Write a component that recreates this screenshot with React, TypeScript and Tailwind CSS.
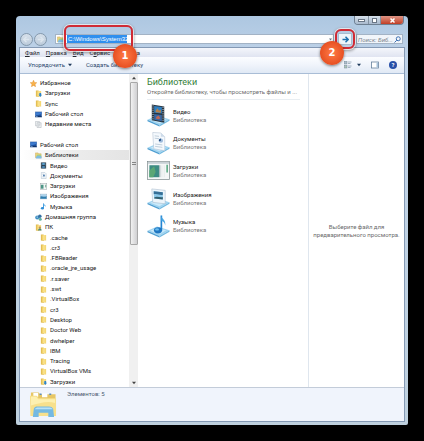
import type { ReactNode } from 'react';

type IconName =
  | 'star' | 'downloads' | 'folder' | 'desktop' | 'recent' | 'libraries' | 'video'
  | 'documents' | 'panel' | 'pictures' | 'music' | 'homegroup' | 'user';

interface TreeItem {
  label: string;
  icon: IconName;
  level: number;
  selected?: boolean;
}

const FAVORITES: TreeItem[] = [
  { label: 'Избранное', icon: 'star', level: 0 },
  { label: 'Загрузки', icon: 'downloads', level: 1 },
  { label: 'Sync', icon: 'folder', level: 1 },
  { label: 'Рабочий стол', icon: 'desktop', level: 1 },
  { label: 'Недавние места', icon: 'recent', level: 1 },
];

const DESKTOP: TreeItem[] = [
  { label: 'Рабочий стол', icon: 'desktop', level: 0 },
  { label: 'Библиотеки', icon: 'libraries', level: 1, selected: true },
  { label: 'Видео', icon: 'video', level: 2 },
  { label: 'Документы', icon: 'documents', level: 2 },
  { label: 'Загрузки', icon: 'panel', level: 2 },
  { label: 'Изображения', icon: 'pictures', level: 2 },
  { label: 'Музыка', icon: 'music', level: 2 },
  { label: 'Домашняя группа', icon: 'homegroup', level: 1 },
  { label: 'ПК', icon: 'user', level: 1 },
  { label: '.cache', icon: 'folder', level: 2 },
  { label: '.cr3', icon: 'folder', level: 2 },
  { label: '.FBReader', icon: 'folder', level: 2 },
  { label: '.oracle_jre_usage', icon: 'folder', level: 2 },
  { label: '.r.saver', icon: 'folder', level: 2 },
  { label: '.swt', icon: 'folder', level: 2 },
  { label: '.VirtualBox', icon: 'folder', level: 2 },
  { label: 'cr3', icon: 'folder', level: 2 },
  { label: 'Desktop', icon: 'folder', level: 2 },
  { label: 'Doctor Web', icon: 'folder', level: 2 },
  { label: 'dwhelper', icon: 'folder', level: 2 },
  { label: 'IBM', icon: 'folder', level: 2 },
  { label: 'Tracing', icon: 'folder', level: 2 },
  { label: 'VirtualBox VMs', icon: 'folder', level: 2 },
  { label: 'Загрузки', icon: 'downloads', level: 2 },
];

const LEVEL_PADDING = ['pl-[10px]', 'pl-[15px]', 'pl-[20px]'];

const folderShape = (
  <>
    <path d="M2 1h6l1 2v12H2z" fill="#e3be55" />
    <path d="M5 3l9-1v12l-9 1.500z" fill="#f5d873" />
    <path d="M3 13l4 2.500 7-1.500v1H4z" fill="#c79c35" />
    <path d="M9 3v11" stroke="#fdeeb0" strokeWidth="1.500" />
  </>
);

const screenShape = (
  <>
    <rect x="0.500" y="2" width="15" height="12" fill="#1d4f9c" stroke="#7692b8" />
    <path d="M1 3h14v4L1 11z" fill="#3d7bce" />
    <path d="M1 12.500h14" stroke="#14305f" strokeWidth="2" />
    <path d="M2 12.500h4" stroke="#8dbbe9" strokeWidth="1.500" />
  </>
);

const SMALL_ICONS: Record<IconName, ReactNode> = {
  star: <path d="M8 .5l2.200 5 5.300.6-4 3.700 1.200 5.500L8 12.500l-4.700 2.800 1.200-5.500-4-3.700 5.300-.6z" fill="#f9b24a" stroke="#dd8b2a" />,
  downloads: (
    <>
      {folderShape}
      <path d="M10 7h4v4h2l-4 5-4-5h2z" fill="#2b83cb" />
    </>
  ),
  folder: folderShape,
  desktop: screenShape,
  recent: (
    <>
      <path d="M1 1h9v10H1z" fill="#edf0f2" stroke="#a2abb2" />
      <path d="M5 4h9v11H5z" fill="#f8f9fa" stroke="#929ca5" />
      <path d="M7 7h5M7 9.500h5M7 12h3" stroke="#8d989f" />
    </>
  ),
  libraries: (
    <>
      <path d="M1 2h6l1 2h6v9H1z" fill="#efd37a" stroke="#c7a650" />
      <path d="M4 6h10v6H4z" fill="#9fce8b" />
      <path d="M2 11c4-3 9-3 13-1v5H2z" fill="#7fbbe2" />
    </>
  ),
  video: (
    <>
      <rect x="2" y="1" width="12" height="14" fill="#263b4d" />
      <rect x="5" y="2" width="6" height="5" fill="#5a9dc9" />
      <rect x="5" y="9" width="6" height="5" fill="#4b86b4" />
      <path d="M3.500 2v13M12.500 2v13" stroke="#b8c9d4" strokeDasharray="1.500 1.500" />
    </>
  ),
  documents: (
    <>
      <path d="M3 1h8l3 3v11H3z" fill="#f7fafd" stroke="#9cb0c4" />
      <path d="M5 5h4M5 11h6" stroke="#a3b5c6" />
      <rect x="7" y="6" width="4" height="4" fill="#4e7dae" />
    </>
  ),
  panel: (
    <>
      <rect x="0.500" y="1.500" width="15" height="13" fill="#f4f6f6" stroke="#8f9a9d" />
      <path d="M2 4h6v9H2z" fill="#4c9586" />
      <path d="M13 4v6" stroke="#5ca187" strokeWidth="2" />
    </>
  ),
  pictures: (
    <>
      <rect x="0.500" y="2.500" width="15" height="11" fill="#d8ebf7" stroke="#8ca6bb" />
      <path d="M1 8c5-2 8 2 14-1v6H1z" fill="#2f7dae" />
      <path d="M2 5h12" stroke="#8ec6e9" strokeWidth="2" />
    </>
  ),
  music: (
    <>
      <path d="M8 1v11" stroke="#2f8fd8" strokeWidth="2" />
      <path d="M8 1c1 3 6 3 5 8-1-3-3-3-5-4z" fill="#57aee8" />
      <ellipse cx="5.500" cy="12" rx="3.500" ry="3" fill="#2f8fd8" />
    </>
  ),
  homegroup: (
    <>
      <circle cx="5" cy="8" r="4.500" fill="#3f8fc3" />
      <circle cx="11" cy="5" r="4" fill="#3570a4" />
      <circle cx="12" cy="12" r="3.500" fill="#63b1a3" />
      <circle cx="5" cy="7" r="1.500" fill="#c8e8f6" />
    </>
  ),
  user: (
    <>
      {folderShape}
      <circle cx="11" cy="8" r="2.500" fill="#c08b5d" />
      <path d="M7 15c0-6 8-6 8 0z" fill="#4f8a76" />
    </>
  ),
};

// Tilted blue tray under the library icons
const tray = (
  <>
    <path d="M1 33l20-9 26 8-21 12z" fill="#9fd4f1" />
    <path d="M1 33l25 11v3L1 36z" fill="#4f9fd2" />
    <path d="M26 44l21-12v3L26 47z" fill="#72b9e0" />
    <path d="M7 33l14-6 19 5-14 8z" fill="#cbeafa" />
  </>
);

interface Library {
  name: string;
  icon: ReactNode;
}

const LIBRARIES: Library[] = [
  {
    name: 'Видео',
    icon: (
      <>
        {tray}
        <path d="M10 1l26 4v34l-26-5z" fill="#273440" />
        <path d="M15 4l16 2v14l-16-2z" fill="#2f7fc0" />
        <path d="M15 21l16 2v13l-16-3z" fill="#3a68a5" />
        <path d="M18 14l4-5 3 5 4-2v6l-11-1z" fill="#b98049" />
        <path d="M19 27l5-3 4 5-3 3-6-1z" fill="#bf6655" />
        <path d="M12.500 3v31M33.500 6v32" stroke="#dbe5eb" strokeWidth="2" strokeDasharray="2 2.500" />
      </>
    ),
  },
  {
    name: 'Документы',
    icon: (
      <>
        {tray}
        <path d="M12 1l17 1 8 8v29l-23-4z" fill="#f5f9fd" stroke="#a7b8ca" />
        <path d="M29 2v8h8z" fill="#cddbea" />
        <path d="M16 8l9 1M16 13l9 1M17 25l15 2M17 30l15 2" stroke="#aabdce" strokeWidth="1.500" />
        <circle cx="29" cy="18" r="4.500" fill="#9ebbdc" />
        <path d="M29 18v-4.500a4.500 4.500 0 0 0-4 6z" fill="#254f83" />
      </>
    ),
  },
  {
    name: 'Загрузки',
    icon: (
      <>
        <rect x="1" y="5" width="46" height="38" fill="#f5f7f7" stroke="#7e8b8e" strokeWidth="1.500" />
        <path d="M2 8h44" stroke="#c8d1d5" strokeWidth="4" />
        <rect x="5" y="13" width="20" height="25" fill="#3d8c83" />
        <path d="M5 38V24l10-9 3 12-5 11z" fill="#5ba775" />
        <path d="M25 13h3v25h-3z" fill="#a8b9bd" />
        <path d="M31 13v25M36 13v25" stroke="#d6dddf" />
        <path d="M42 12v16" stroke="#4ba278" strokeWidth="3" />
      </>
    ),
  },
  {
    name: 'Изображения',
    icon: (
      <>
        {tray}
        <path d="M10 4l28 3v28l-26-3z" fill="#edf5fb" stroke="#9db2c5" />
        <path d="M14 9l19 2v15l-18-2z" fill="#8cc8e8" />
        <path d="M14 9l19 2v5c-6 2-11-3-19-1z" fill="#376f96" />
        <path d="M15 22c6-4 12 1 18-1v5l-18-2z" fill="#315f70" />
      </>
    ),
  },
  {
    name: 'Музыка',
    icon: (
      <>
        {tray}
        <path d="M30 1v30" stroke="#2386d2" strokeWidth="3.500" />
        <path d="M30 1c1 8 10 9 8 21-1-7-4-8-8-10z" fill="#4aa7e2" />
        <ellipse cx="23" cy="32" rx="8.500" ry="6.500" fill="#1f76c1" />
        <ellipse cx="21" cy="30" rx="4" ry="2.500" fill="#6bbdf0" />
      </>
    ),
  },
];

function TreeRow({ item }: { item: TreeItem }) {
  return (
    <li className={`flex min-h-0 flex-1 ${item.selected ? 'bg-linear-to-r from-white via-[#ececec] to-[#e4e4e4]' : ''}`}>
      <button className={`flex w-full items-center gap-[3px] whitespace-nowrap text-left leading-none ${LEVEL_PADDING[item.level]}`}>
        <svg className="size-[7px] shrink-0" viewBox="0 0 16 16" aria-hidden="true">
          {SMALL_ICONS[item.icon]}
        </svg>
        {item.label}
      </button>
    </li>
  );
}

function Badge({ children }: { children: ReactNode }) {
  return (
    <span className="flex size-6 items-center justify-center rounded-full bg-radial from-[#ff7a45] to-[#dc3b0c] font-['DejaVu_Sans'] text-[10px] font-bold leading-none text-white shadow-[0_1px_3px_#00000080]">
      {children}
    </span>
  );
}

function TitleBar() {
  return (
    <div className="flex h-[15px] items-start justify-end">
      <div className="flex h-[9px] overflow-hidden rounded-b-sm border border-t-0 border-[#6e7f91]">
        <button aria-label="Свернуть" className="flex w-[13px] items-center justify-center bg-linear-to-b from-[#d5dfe9] to-[#a9bace]">
          <span className="h-[3px] w-[7px] border border-[#6a7686] bg-white" />
        </button>
        <button aria-label="Развернуть" className="flex w-[13px] items-center justify-center border-x border-[#8392a2] bg-linear-to-b from-[#d5dfe9] to-[#a9bace]">
          <span className="size-[5px] border border-[#6a7686] bg-white" />
        </button>
        <button aria-label="Закрыть" className="flex w-[22px] items-center justify-center bg-linear-to-b from-[#dc9384] to-[#c23c22]">
          <svg className="size-[5px]" viewBox="0 0 10 10" aria-hidden="true">
            <path d="M1 1l8 8M9 1l-8 8" stroke="#fff" strokeWidth="3" />
          </svg>
        </button>
      </div>
    </div>
  );
}

function NavButton({ label, path }: { label: string; path: string }) {
  return (
    <button aria-label={label} className="flex size-[13px] items-center justify-center rounded-full border border-[#8499ad] bg-linear-to-b from-[#d6e0ea] to-[#bccbdb]">
      <svg className="size-[7px]" viewBox="0 0 10 10" fill="none" stroke="#dde6ee" strokeWidth="2" aria-hidden="true">
        <path d={path} />
      </svg>
    </button>
  );
}

function AddressRow() {
  return (
    <div className="flex h-4 items-center gap-px pr-px">
      <NavButton label="Назад" path="M9 5H1M5 1L1 5l4 4" />
      <NavButton label="Вперёд" path="M1 5h8M5 1l4 4-4 4" />
      <div className="relative ml-[7px] flex h-[10px] min-w-0 flex-1 items-center border border-[#a3b3c5] bg-white pl-px">
        <svg className="mr-[3px] size-[7px] shrink-0" viewBox="0 0 16 16" aria-hidden="true">
          {SMALL_ICONS.libraries}
        </svg>
        <input
          aria-label="Адрес"
          defaultValue="C:\Windows\System32"
          className="h-[8px] w-[60px] bg-[#2f8fee] pl-px font-['Liberation_Sans',sans-serif] leading-none text-white outline-none"
        />
        <svg className="ml-auto mr-px size-[3px]" viewBox="0 0 6 6" aria-hidden="true">
          <path d="M0 1h6L3 5z" fill="#6b7785" />
        </svg>
        {/* Step 1 highlight */}
        <span className="pointer-events-none absolute -top-[10px] left-[8px] h-[26px] w-[69px] rounded-md border-2 border-[#d02b35] shadow-[0_0_0_1px_#ffffffb0,0_1px_3px_1px_#00000060]" />
        <span className="absolute left-[57px] top-[9px] z-10">
          <Badge>1</Badge>
        </span>
      </div>
      <div className="relative flex">
        <button aria-label="Переход" className="mx-[3px] flex h-[12px] w-[14px] items-center justify-center border border-[#a9bccf] bg-[#eef5fb]">
          <svg className="size-[7px]" viewBox="0 0 14 14" fill="none" stroke="#1d70ad" strokeWidth="3" aria-hidden="true">
            <path d="M1 7h11M7 1.500L12.500 7 7 12.500" />
          </svg>
        </button>
        {/* Step 2 highlight */}
        <span className="pointer-events-none absolute -top-[4px] left-0 h-5 w-5 rounded-md border-2 border-[#d02b35] shadow-[0_0_0_1px_#ffffffb0,0_1px_3px_1px_#00000060]" />
        <span className="absolute -left-[15px] top-[8px] z-10">
          <Badge>2</Badge>
        </span>
      </div>
      <label className="flex h-[10px] w-[47px] items-center border border-[#a3b3c5] bg-[#f1f5fa] px-px">
        <input
          type="text"
          aria-label="Поиск"
          placeholder="Поиск: Биб..."
          className="h-[8px] w-full min-w-0 italic leading-none outline-none placeholder:text-[#7d858f]"
        />
        <svg className="size-[7px] shrink-0" viewBox="0 0 14 14" fill="none" stroke="#3c6fb0" strokeWidth="2" aria-hidden="true">
          <circle cx="8.500" cy="5.500" r="4" />
          <path d="M5.500 8.500L1 13" />
        </svg>
      </label>
    </div>
  );
}

function MenuBar() {
  return (
    <nav className="flex h-[9px] items-center gap-[6px] bg-linear-to-b from-[#f4f6fb] to-[#e0e4f1] pl-[5px] text-[#25282e]">
      <button className="leading-none"><u>Ф</u>айл</button>
      <button className="leading-none"><u>П</u>равка</button>
      <button className="leading-none"><u>В</u>ид</button>
      <button className="leading-none">С<u>е</u>рвис</button>
      <button className="leading-none"><u>С</u>правка</button>
    </nav>
  );
}

function Toolbar() {
  return (
    <div className="flex h-[17px] items-center border-b border-[#a9bdd6] bg-linear-to-b from-[#fcfdff] via-[#f0f4fb] to-[#e0e9f5] pl-2 pr-[7px] text-[#2b476c]">
      <button className="flex items-center gap-[3px] leading-none">
        Упорядочить
        <svg className="size-[4px]" viewBox="0 0 6 6" aria-hidden="true">
          <path d="M0 1h6L3 5z" fill="#1e395b" />
        </svg>
      </button>
      <button className="ml-[14px] leading-none">Создать библиотеку</button>
      <div className="ml-auto flex items-center">
        <button aria-label="Вид" className="flex items-center gap-[5px]">
          <svg className="size-[8px]" viewBox="0 0 16 16" aria-hidden="true">
            <rect x="1" y="1" width="5" height="5" fill="#aebfcc" stroke="#74899a" />
            <rect x="1" y="9" width="5" height="5" fill="#aec7b6" stroke="#74899a" />
            <path d="M8 2h7M8 5h5M8 10h7M8 13h5" stroke="#8b9fb0" strokeWidth="1.500" />
          </svg>
          <svg className="size-[4px]" viewBox="0 0 6 6" aria-hidden="true">
            <path d="M0 1h6L3 5z" fill="#1e395b" />
          </svg>
        </button>
        <button aria-label="Область просмотра" className="ml-[10px]">
          <svg className="block size-[8px]" viewBox="0 0 16 16" aria-hidden="true">
            <rect x="1" y="2" width="14" height="12" fill="#fff" stroke="#5d7996" strokeWidth="1.500" />
            <path d="M11 3h3v10h-3z" fill="#a8c3dc" />
          </svg>
        </button>
        <button aria-label="Справка" className="ml-[10px] flex size-[8px] items-center justify-center rounded-full bg-[#2850a8] font-bold leading-none text-white">
          ?
        </button>
      </div>
    </div>
  );
}

function NavigationPane() {
  return (
    <aside className="flex w-[118px] shrink-0">
      <ul className="flex min-w-0 flex-1 flex-col pt-[4px]">
        {FAVORITES.map(item => (
          <TreeRow key={item.label} item={item} />
        ))}
        <li className="flex-1" aria-hidden="true" />
        {DESKTOP.map((item, idx) => (
          <TreeRow key={idx} item={item} />
        ))}
      </ul>
      {/* Scrollbar */}
      <div className="flex w-[9px] flex-col items-center bg-[#f0f0f0]">
        <button aria-label="Вверх" className="flex h-[8px] items-center">
          <svg className="size-[4px]" viewBox="0 0 6 6" aria-hidden="true">
            <path d="M0 5h6L3 1z" fill="#444" />
          </svg>
        </button>
        <div className="flex h-[52%] w-[8px] flex-col items-center justify-center gap-px rounded-[1px] border border-[#a8a8a8] bg-linear-to-r from-[#f1f1f1] to-[#d0d0d2]">
          <span className="h-px w-[4px] bg-[#858585]" />
          <span className="h-px w-[4px] bg-[#858585]" />
        </div>
        <button aria-label="Вниз" className="mt-auto flex h-[9px] items-center">
          <svg className="size-[4px]" viewBox="0 0 6 6" aria-hidden="true">
            <path d="M0 1h6L3 5z" fill="#444" />
          </svg>
        </button>
      </div>
    </aside>
  );
}

function LibraryList() {
  return (
    <main className="min-w-0 flex-1 pl-[9px] pt-[2px]">
      <h1 className="text-[9px] leading-[12px] text-[#35803a]">Библиотеки</h1>
      <p className="mr-2 whitespace-nowrap border-b border-[#e9eef2] pb-[3px] leading-[8px] text-[#6d6d6d]">
        Откройте библиотеку, чтобы просмотреть файлы и ...
      </p>
      <ul className="mt-[2px] grid h-[138px] grid-rows-5">
        {LIBRARIES.map(lib => (
          <li key={lib.name} className="flex">
            <button className="flex items-center gap-[3px] text-left leading-[8px]">
              <svg className="size-[23px] shrink-0" viewBox="0 0 48 48" aria-hidden="true">
                {lib.icon}
              </svg>
              <span>
                <span className="block text-[#1b1b1b]">{lib.name}</span>
                <span className="block text-[#777]">Библиотека</span>
              </span>
            </button>
          </li>
        ))}
      </ul>
    </main>
  );
}

function DetailsPane() {
  return (
    <footer className="flex h-[34px] shrink-0 items-start border-t border-[#c3ccd9] bg-[#f0f4fc] pl-[9px] pt-[2px]">
      <svg className="size-[28px]" viewBox="0 0 58 58" aria-hidden="true">
        <path d="M4 5h16l3 4h32v44H4z" fill="#e6c665" />
        <path d="M9 6h10v8H9zM27 7h11v8H27z" fill="#fff" />
        <path d="M22 9h4M42 9h4" stroke="#5c8dbe" strokeWidth="3" />
        <path d="M2 12h14l4 5h36v37H3z" fill="#f7e08c" />
        <path d="M4 14h11l4 5h35v8C38 22 20 28 4 32z" fill="#fdf0b0" />
        <path d="M8 56l2-17c1-4 4-5 8-5h23c5 0 8 2 9 5l2 17H40v-9H20v9z" fill="#74b9e2" />
        <path d="M12 40c1-3 4-4 7-4h22c4 0 7 1 8 4z" fill="#b7e2f7" />
      </svg>
      <span className="ml-[10px] leading-[8px] text-[#4a5a70]">Элементов: 5</span>
    </footer>
  );
}

export default function App() {
  return (
    <div className="flex min-h-screen bg-black p-4 font-['Roboto','Noto_Sans',sans-serif] text-[6px] text-[#202020]">
      <div className="flex min-w-0 flex-1 flex-col rounded-t-[4px] rounded-b-[2px] bg-linear-to-b from-[#adc7e1] via-[#c0d3e8] via-10% to-[#bed0de] px-1 pb-[3px]">
        <TitleBar />
        <AddressRow />
        <div className="flex flex-1 flex-col border border-[#8499b4] bg-white -mx-px">
          <MenuBar />
          <Toolbar />
          <div className="flex min-h-[310px] flex-1">
            <NavigationPane />
            <LibraryList />
            <section className="flex w-[96px] shrink-0 items-center justify-center border-l border-[#dfe6ee] text-center leading-[8px] text-[#6a6a6a]">
              <p>
                Выберите файл для<br />предварительного просмотра.
              </p>
            </section>
          </div>
          <DetailsPane />
        </div>
      </div>
    </div>
  );
}
